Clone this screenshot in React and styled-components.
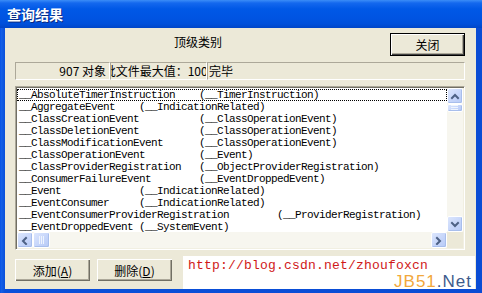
import React from 'react';
import styled, { createGlobalStyle } from 'styled-components';

const Global = createGlobalStyle`
  html, body { margin: 0; padding: 0; background: #fff; }
  body {
    width: 482px; height: 293px; overflow: hidden;
    font-family: "Noto Sans CJK SC", "Liberation Sans", sans-serif;
  }
  * { box-sizing: border-box; }
`;

const Window = styled.div`
  width: 482px;
  height: 293px;
  display: flex;
  flex-direction: column;
  background: #0A4FDC;
`;

const TitleBar = styled.div`
  height: 28px;
  flex: none;
  display: flex;
  align-items: center;
  padding-left: 7px;
  background: linear-gradient(180deg, #3B8DF7 0px, #1468EE 3px, #0058E6 9px, #0054E2 18px, #0050DA 24px, #0046C8 28px);
`;

const Title = styled.span`
  color: #fff;
  font-size: 14px;
  font-weight: bold;
  text-shadow: 1px 1px 0 #0A2A80;
  line-height: 16px;
`;

const Frame = styled.div`
  flex: 1;
  display: flex;
  padding: 0 6px 6px 4px;
  border-left: 1px solid #0B56E6;
  background: linear-gradient(90deg, #1461E8 0, #0A50DA 4px, #0A4CD4 100%);
`;

const Body = styled.div`
  flex: 1;
  display: flex;
  flex-direction: column;
  background: #ECE9D8;
  padding: 5px 11px 0 10px;
`;

const TopRow = styled.div`
  display: flex;
  justify-content: space-between;
  align-items: flex-start;
  height: 23px;
`;

const Heading = styled.span`
  margin-left: 159px;
  margin-top: 1px;
  font-size: 12px;
  line-height: 16px;
  color: #000;
`;

const CloseButton = styled.button`
  width: 75px;
  height: 23px;
  padding: 0;
  border: 1px solid #000;
  background: #ECE9D8;
  box-shadow: inset 1px 1px 0 #fff, inset -1px -1px 0 #404040, inset -2px -2px 0 #ACA899;
  font-family: inherit;
  font-size: 12px;
  color: #000;
`;

const StatusBar = styled.div`
  margin-top: 6px;
  height: 18px;
  display: flex;
`;

const Cell = styled.div`
  width: ${p => (p.$w ? `${p.$w}px` : 'auto')};
  flex: ${p => (p.$w ? 'none' : '1')};
  display: flex;
  justify-content: ${p => p.$justify || 'flex-start'};
  border: 1px solid;
  border-color: #ACA899 #fff #fff #ACA899;
  font-size: 12px;
  line-height: 16px;
  color: #000;
  white-space: nowrap;
  overflow: hidden;
  padding: ${p => (p.$justify === 'flex-end' ? '0 3px 0 0' : '0 0 0 1px')};
`;

const CellText = styled.span`
  flex: none;
`;

const ListBox = styled.div`
  margin-top: 6px;
  height: 164px;
  border: 1px solid;
  border-color: #ACA899 #fff #fff #ACA899;
  box-shadow: inset 1px 1px 0 #716F64, inset -1px -1px 0 #F1EFE2;
  padding: 1px;
  display: grid;
  grid-template-columns: 1fr 16px;
  grid-template-rows: 1fr 16px;
`;

const ListContent = styled.div`
  background: #fff;
  overflow: hidden;
  padding-top: 1px;
  font-family: "Liberation Mono", "DejaVu Sans Mono", monospace;
  font-size: 11px;
  letter-spacing: -0.6px;
  color: #000;
`;

const Row = styled.div`
  height: 12px;
  line-height: 12px;
  white-space: pre;
  padding-left: 2px;
  outline: ${p => (p.$focus ? '1px dotted #000' : 'none')};
  outline-offset: -1px;
`;

const VTrack = styled.div`
  background: #F7F6EF;
  display: flex;
  flex-direction: column;
  justify-content: space-between;
`;

const HTrack = styled.div`
  background: #F7F6EF;
  display: flex;
  align-items: center;
  justify-content: space-between;
`;

const Corner = styled.div`
  background: #ECE9D8;
`;

const ArrowBtn = styled.div`
  width: ${p => p.$w || 16}px;
  height: ${p => p.$h || 16}px;
  flex: none;
  border: 1px solid #fff;
  border-radius: 2px;
  background: linear-gradient(135deg, #DCE6FD 0%, #C4D4FA 60%, #B7CAF6 100%);
  box-shadow: inset -1px -1px 0 #A8BEEC;
  display: flex;
  align-items: center;
  justify-content: center;
`;

const ThumbWrap = styled.div`
  display: flex;
  flex-direction: ${p => (p.$v ? 'column' : 'row')};
`;

const Chevron = ({ dir }) => {
  const paths = {
    up: 'M2 6 L5 3 L8 6',
    down: 'M2 3 L5 6 L8 3',
    left: 'M6 2 L3 5 L6 8',
    right: 'M3 2 L6 5 L3 8',
  };
  return (
    <svg width="10" height="9" viewBox="0 0 10 9">
      <path d={paths[dir]} fill="none" stroke="#4D6185" strokeWidth="2" strokeLinecap="square" />
    </svg>
  );
};

const Grip = ({ v }) => (
  <svg width="8" height={v ? 6 : 8} viewBox={v ? '0 0 8 6' : '0 0 8 8'}>
    {v
      ? [0, 2, 4].map(i => <line key={i} x1="0" x2="7" y1={i + 0.5} y2={i + 0.5} stroke="#EEF4FE" />)
      : [1, 3, 5].map(i => <line key={i} x1={i + 0.5} x2={i + 0.5} y1="0" y2="8" stroke="#EEF4FE" />)}
  </svg>
);

const BottomRow = styled.div`
  flex: 1;
  margin-top: 8px;
  display: flex;
  align-items: flex-start;
  gap: 7px;
`;

const FlatButton = styled.button`
  width: 75px;
  height: 22px;
  padding: 0;
  margin-top: 1px;
  border: none;
  background: #ECE9D8;
  box-shadow: inset 1px 1px 0 #fff, inset -1px -1px 0 #716F64, inset -2px -2px 0 #ACA899;
  font-family: inherit;
  font-size: 12px;
  color: #000;
  u { text-decoration: underline; }
`;

const Watermark = styled.div`
  flex: 1;
  align-self: stretch;
  margin: -2px -10px 0 4px;
  background: #fff;
  display: flex;
  flex-direction: column;
  padding: 3px 3px 0 5px;
  overflow: hidden;
`;

const Url = styled.span`
  font-family: "Liberation Mono", "DejaVu Sans Mono", monospace;
  font-size: 13px;
  line-height: 14px;
  letter-spacing: 0.2px;
  color: #D01818;
`;

const Logo = styled.span`
  align-self: flex-end;
  font-family: "Liberation Sans", sans-serif;
  font-size: 17px;
  line-height: 15px;
  margin-top: 1px;
  letter-spacing: 1px;
`;

const LogoPart = styled.span`
  color: ${p => p.$c};
`;

const rows = [
  '__AbsoluteTimerInstruction    (__TimerInstruction)',
  '__AggregateEvent    (__IndicationRelated)',
  '__ClassCreationEvent          (__ClassOperationEvent)',
  '__ClassDeletionEvent          (__ClassOperationEvent)',
  '__ClassModificationEvent      (__ClassOperationEvent)',
  '__ClassOperationEvent         (__Event)',
  '__ClassProviderRegistration   (__ObjectProviderRegistration)',
  '__ConsumerFailureEvent        (__EventDroppedEvent)',
  '__Event             (__IndicationRelated)',
  '__EventConsumer     (__IndicationRelated)',
  '__EventConsumerProviderRegistration        (__ProviderRegistration)',
  '__EventDroppedEvent (__SystemEvent)',
];

export default function App() {
  return (
    <>
      <Global />
      <Window>
        <TitleBar>
          <Title>查询结果</Title>
        </TitleBar>
        <Frame>
          <Body>
            <TopRow>
              <Heading>顶级类别</Heading>
              <CloseButton>关闭</CloseButton>
            </TopRow>
            <StatusBar>
              <Cell $w={95} $justify="flex-end"><CellText>907 对象</CellText></Cell>
              <Cell $w={97} $justify="center"><CellText>批文件最大值：1000</CellText></Cell>
              <Cell><CellText>完毕</CellText></Cell>
            </StatusBar>
            <ListBox>
              <ListContent>
                {rows.map((r, i) => (
                  <Row key={i} $focus={i === 0}>{r}</Row>
                ))}
              </ListContent>
              <VTrack>
                <ThumbWrap $v>
                  <ArrowBtn><Chevron dir="up" /></ArrowBtn>
                  <ArrowBtn $h={8}><Grip v /></ArrowBtn>
                </ThumbWrap>
                <ArrowBtn><Chevron dir="down" /></ArrowBtn>
              </VTrack>
              <HTrack>
                <ThumbWrap>
                  <ArrowBtn><Chevron dir="left" /></ArrowBtn>
                  <ArrowBtn $w={17}><Grip /></ArrowBtn>
                </ThumbWrap>
                <ArrowBtn><Chevron dir="right" /></ArrowBtn>
              </HTrack>
              <Corner />
            </ListBox>
            <BottomRow>
              <FlatButton>添加(<u>A</u>)</FlatButton>
              <FlatButton>删除(<u>D</u>)</FlatButton>
              <Watermark>
                <Url>http://blog.csdn.net/zhoufoxcn</Url>
                <Logo>
                  <LogoPart $c="#F2A83C">JB51</LogoPart>
                  <LogoPart $c="#3E5C8C">.Net</LogoPart>
                </Logo>
              </Watermark>
            </BottomRow>
          </Body>
        </Frame>
      </Window>
    </>
  );
}
